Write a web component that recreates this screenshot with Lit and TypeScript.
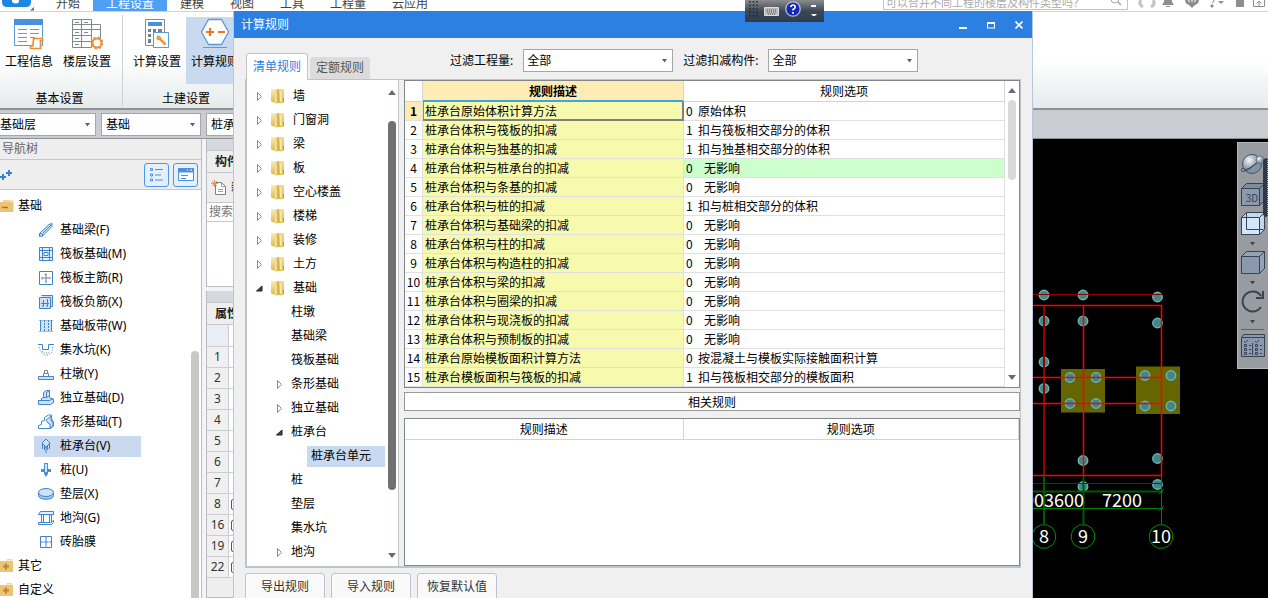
import { LitElement, html, css, svg, nothing } from "lit";
import { customElement, property, state } from "lit/decorators.js";
import { classMap } from "lit/directives/class-map.js";

const base = css`
  * { box-sizing: border-box; }
  :host {
    font-family: "Noto Sans", "Noto Sans CJK SC", sans-serif;
    font-size: 12px;
    line-height: 20px;
    color: #000;
  }
  button, input, select {
    font: inherit;
    color: inherit;
    margin: 0;
    padding: 0;
    border: 0;
    background: none;
    border-radius: 0;
    outline: none;
  }
  svg { display: block; flex: none; }
  ul { list-style: none; margin: 0; padding: 0; }
  .combo { position: relative; display: block; }
  .combo select {
    appearance: none;
    width: 100%;
    height: 23px;
    padding: 0 20px 0 4px;
    border: 1px solid #a6a6a6;
    background: #fff;
  }
  .combo svg { position: absolute; right: 5px; top: 10px; pointer-events: none; }
`;

const caret = (color = "#606060") =>
  html`<svg width="7" height="4" viewBox="0 0 7 4"><path d="M1 0h5L3.500 3.500z" fill=${color} /></svg>`;
const arrowUp = html`<svg width="8" height="5" viewBox="0 0 8 5"><path d="M0 5h8L4 0z" fill="#6a6a70" /></svg>`;
const arrowDown = html`<svg width="8" height="5" viewBox="0 0 8 5"><path d="M0 0h8L4 5z" fill="#6a6a70" /></svg>`;

/* ---------- ribbon icons ---------- */
const iconInfo = html`<svg width="32" height="32" viewBox="0 0 32 32" fill="none">
  <path d="M1.500 1.500h28v26h-28z" fill="#fff" stroke="#5b9bd8" />
  <path d="M1 1h29v6H1z" fill="#4a90dc" />
  <path d="M5 11.500h9M17 11.500h9M5 15.500h9M17 15.500h9M5 19.500h9M17 19.500h5M5 23.500h9" stroke="#8c9499" />
  <path d="M20.500 20.500h9v2h-2v8h-10v-2.500h2.500z" fill="#fff" stroke="#ec8f36" stroke-width="1.700" stroke-linejoin="round" />
</svg>`;
const iconFloor = html`<svg width="32" height="32" viewBox="0 0 32 32" fill="none" stroke="#7e898f">
  <path d="M1.500 1.500h19v28h-19zM20.500 6.500h9v14" fill="#fff" />
  <path d="M10.500 1.500v28M1.500 6.500h19M1.500 11.500h28M1.500 17.500h19M1.500 23.500h19M4 4.500h4M13 4.500h4M4 14.500h4M13 14.500h4M4 20.500h4M4 26.500h4" />
  <circle cx="26" cy="25" r="4.500" fill="#fff" stroke="#ee8f35" stroke-width="2" />
  <circle cx="26" cy="25" r="5.600" stroke="#ee8f35" stroke-width="1.800" stroke-dasharray="2.200 2.200" />
</svg>`;
const iconCalc = html`<svg width="32" height="32" viewBox="0 0 32 32" fill="none">
  <path d="M4.500 1.500h19v26h-19z" fill="#fff" stroke="#808b91" />
  <path d="M7 4h14v4H7z" fill="#4a90dc" />
  <path d="M7 11h3v3H7zM12 11h3v3h-3zM17 11h4v3h-4zM7 16h3v3H7zM12 16h2v3h-2zM7 21h3v4H7z" fill="#75828a" />
  <path d="M12.500 14.500h15v15h-15z" fill="#fff" stroke="#5b9bd8" />
  <path d="M16 18l3 .5 1 2.500 5 4.500-1.500 1.500-4.500-5-3-1 .2-2 2 1.500 1-1z" fill="#ee8f35" stroke="#ee8f35" />
</svg>`;
const iconRules = html`<svg width="32" height="32" viewBox="0 0 32 32" fill="none">
  <path d="M9.500 1.500h13l7 12.500-7 12.500h-13l-7-12.500z" fill="#fff" stroke="#5b9bd8" stroke-width="1.300" />
  <path d="M7 14h8M11 10v8M19 14h7" stroke="#ee7420" stroke-width="2.200" />
  <path d="M4 29.500h24" stroke="#5b9bd8" />
</svg>`;

/* ---------- tree icons ---------- */
const B = "#3f85cc";
const L = "#cfe2f7";
const navIcons: Record<string, unknown> = {
  beam: svg`<path d="M1.500 11.500L11 2.500l3-1v3l-9.500 9.500-3 .5z" fill=${L} stroke=${B} /><path d="M1.500 11.500l3 .5v2.500M5 11L13 3" stroke=${B} fill="none" />`,
  raft: svg`<path d="M1.500 1.500h13v13h-13zM4.500 1.500v13M11.500 1.500v13M1.500 4.500h13M1.500 11.500h13" fill="#e3effb" stroke=${B} /><path d="M6 6.500h4v3H6z" fill="#fff" stroke=${B} />`,
  main: svg`<path d="M1.500 1.500h13v13h-13z" fill="#fff" stroke=${B} /><path d="M8 4v8M4 8h8M6.500 4.500L8 4l1 1M4 7v2.500M12 7v2M7 12h2" fill="none" stroke="#77828a" />`,
  neg: svg`<path d="M3.500 1.500h11v11h-2M1.500 3.500h11v11h-11z" fill=${L} stroke=${B} /><path d="M5.500 6v6M9.500 5v7M3 9.500h8M4 12h2M8 12h2" fill="none" stroke=${B} />`,
  strip: svg`<path d="M1.500 2.500h13M1.500 13.500h13" stroke=${B} stroke-dasharray="1 1" /><path d="M2 3h12v10H2z" fill=${L} /><path d="M2.500 2v11M13.500 2v11" stroke=${B} /><path d="M6.500 2v11M10.500 2v11" stroke=${B} stroke-dasharray="2 1" />`,
  pit: svg`<path d="M0 2.500h4.500v5h6v-5H16" fill="none" stroke=${B} /><path d="M1 5l2 5 3 3h4l4-3 1-5M4 9l2 2h4l2-2" fill="none" stroke=${B} stroke-dasharray="1 1.500" />`,
  pier: svg`<path d="M.500 10.500h15v3H.500z" fill=${L} stroke=${B} /><path d="M5.500 10V7.500h5V10M6.500 7V4.500h3V7" fill="none" stroke="#77828a" />`,
  iso: svg`<path d="M.500 10.500h3v-2l2-1v-5l3-2h3v7l4 2v3l-3 2H.500z" fill=${L} stroke=${B} /><path d="M.500 10.500h11l4-2M5.500 7.500h3l3-2M8.500 7.500v-5l3-2" fill="none" stroke=${B} />`,
  bar: svg`<path d="M.500 14.500v-3l3-1v-3l3-1v-3l4-2.500h3v4l2 3v4l-3 2.500z" fill="#fff" stroke=${B} /><path d="M8 6l5-4v4l2 3v3l-3 2V10l-2-1z" fill=${L} stroke=${B} />`,
  cap: svg`<path d="M8 1l4 4-4 4.500L4 5z" fill=${L} stroke=${B} /><path d="M4.500 5v6M11.500 5v6M8 8v7M6.500 7v5M9.500 7v5" stroke=${B} fill="none" />`,
  pile: svg`<path d="M6 1h4v6h3v3h-3v2l-2 3-2-3v-2H3V7h3z" fill="#4b8fd4" /><path d="M7 2h2v8H7z" fill=${L} />`,
  pad: svg`<path d="M.500 6.500v3c0 5 15 5 15 0v-3" fill="#a9c9ea" stroke=${B} /><ellipse cx="8" cy="6.500" rx="7.500" ry="4" fill=${L} stroke=${B} />`,
  trench: svg`<path d="M.500 4.500l2-3h13v3z" fill="#e3effb" stroke=${B} /><path d="M3.500 4.500v8M5.500 4.500v8M11.500 4.500v8M13.500 4.500v8M.500 12.500h12l3-2v2l-2 2H.500z" fill="none" stroke=${B} />`,
  brick: svg`<path d="M2.500 2.500h11v11h-11zM8 2.500v11M2.500 8h11" fill="#fff" stroke=${B} /><path d="M5 8h1M10 8h1" stroke="#fff" />`,
};

const navItems: [string, string][] = [
  ["beam", "基础梁(F)"],
  ["raft", "筏板基础(M)"],
  ["main", "筏板主筋(R)"],
  ["neg", "筏板负筋(X)"],
  ["strip", "基础板带(W)"],
  ["pit", "集水坑(K)"],
  ["pier", "柱墩(Y)"],
  ["iso", "独立基础(D)"],
  ["bar", "条形基础(T)"],
  ["cap", "桩承台(V)"],
  ["pile", "桩(U)"],
  ["pad", "垫层(X)"],
  ["trench", "地沟(G)"],
  ["brick", "砖胎膜"],
];

const folderOpen = html`<svg width="15" height="14" viewBox="0 0 15 14">
  <path d="M3 1h10v3H3z" fill="#f3d49a" /><path d="M0 3h14v10H0z" fill="#edc377" />
  <path d="M10 1h4v12h-1V3h-3z" fill="#f7e3bb" /><path d="M2 8.500h6" stroke="#a87a1d" stroke-width="1.500" />
</svg>`;
const folderPlus = html`<svg width="15" height="14" viewBox="0 0 15 14">
  <path d="M7 0h5l1 1.500H6z" fill="#f3d49a" /><path d="M0 2h13v11H0z" fill="#edc377" />
  <path d="M3 7.500h6M6 4.500v6" stroke="#b88a2d" stroke-width="2" />
</svg>`;

@customElement("nav-panel")
export class NavPanel extends LitElement {
  @state() private selected = "桩承台(V)";

  static styles = [base, css`
    :host { display: flex; flex-direction: column; min-width: 0; background: #fff; border-right: 1px solid #b9bcc2; overflow: hidden; }
    .title { height: 21px; padding-left: 2px; background: #eee; color: #666; border-bottom: 1px solid #c4c7cc; }
    .tools { display: flex; align-items: center; gap: 4px; height: 30px; flex: none; padding-right: 3px; background: #eee; border-bottom: 1px solid #c4c7cc; }
    .tools .plus { margin-right: auto; }
    .toggle { width: 25px; height: 24px; display: grid; place-items: center; border: 1px solid #4a98ee; border-radius: 3px; background: #e5f0fc; }
    .body { flex: 1; min-height: 0; display: flex; overflow: hidden; }
    ul { flex: 1; min-width: 0; padding-top: 4px; }
    li { height: 24px; display: flex; align-items: center; }
    .group { display: flex; align-items: center; gap: 3px; height: 22px; }
    .item { display: flex; align-items: center; gap: 6px; height: 21px; margin-left: 34px; padding-left: 4px; width: 107px; }
    .item.on { background: #c9d9f0; }
    .bar { width: 8px; margin: 161px 2px 0 0; border-radius: 4px 4px 0 0; background: #c8c8c8; }
  `];

  render() {
    return html`
      <div class="title">导航树</div>
      <div class="tools">
        <button class="plus" aria-label="展开"><svg width="13" height="12" viewBox="0 0 13 12"><path d="M0 8h6M3 5v6M6 4h6M9 1v6" stroke="#3580d2" stroke-width="2" /></svg></button>
        <button class="toggle" aria-label="列表"><svg width="15" height="14" viewBox="0 0 15 14" fill="none" stroke="#4a90dc"><path d="M1.500.500h2v2h-2zM1.500 6h2v2h-2zM1.500 11h2v2h-2zM6 1.500h8M6 7h6M6 12h8" /></svg></button>
        <button class="toggle" aria-label="窗口"><svg width="16" height="14" viewBox="0 0 16 14" fill="none" stroke="#4a90dc"><path d="M.500.500h15v12h-15z" fill="#fff" /><path d="M0 2.500h16" stroke-width="4" /><path d="M9 2h1M12 2h2" stroke="#fff" /><path d="M3 7.500h7M3 10.500h5" /></svg></button>
      </div>
      <div class="body">
        <ul>
          <li><button class="group">${folderOpen}<span>基础</span></button></li>
          ${navItems.map(([icon, label]) => html`<li>
            <button class=${classMap({ item: true, on: label === this.selected })} @click=${() => (this.selected = label)}>
              <svg width="16" height="16" viewBox="0 0 16 16">${navIcons[icon]}</svg><span>${label}</span>
            </button></li>`)}
          <li><button class="group">${folderPlus}<span>其它</span></button></li>
          <li><button class="group">${folderPlus}<span>自定义</span></button></li>
        </ul>
        <div class="bar"></div>
      </div>`;
  }
}

@customElement("side-lists")
export class SideLists extends LitElement {
  static styles = [base, css`
    :host { display: flex; flex-direction: column; gap: 4px; min-width: 0; background: #f3f4f6; overflow: hidden; }
    section { border: 1px solid #b9bcc2; border-top: 0; background: #fff; }
    .strip { height: 12px; background: #d5d8dd; border-bottom: 1px solid #c4c7cc; }
    h3 { margin: 0; height: 22px; padding: 1px 8px; font-size: 12px; line-height: 20px; background: #eee; border-bottom: 1px solid #c4c7cc; color: #222; }
    .new { display: flex; align-items: center; gap: 4px; height: 30px; width: 100%; padding-left: 4px; background: #eee; border-bottom: 1px solid #c4c7cc; }
    input { display: block; width: 100%; height: 19px; padding-left: 2px; border-bottom: 1px solid #c4c7cc; }
    input::placeholder { color: #777; opacity: 1; }
    .empty { height: 64px; }
    .props { flex: 1; background: #eee; }
    table { width: 100%; border-spacing: 0; table-layout: fixed; }
    th, td { height: 21px; padding: 0; line-height: 20px; border-bottom: 1px solid #c9ccd1; }
    th { width: 22px; font-weight: 400; color: #333; background: #f0f0f0; border-right: 1px solid #c9ccd1; }
    td { background: #fff; }
    thead th { background: #e9eef6; height: 22px; }
    .box { display: block; width: 9px; height: 11px; margin-left: 2px; border: 1px solid #555; border-radius: 2px; }
  `];

  render() {
    return html`
      <section>
        <div class="strip"></div>
        <h3>构件</h3>
        <button class="new">
          <svg width="16" height="16" viewBox="0 0 16 16" fill="none"><path d="M4.500 2.500h6l4 4v8h-10z" fill="#fff" stroke="#77828a" /><path d="M10.500 2.500v4h4M7 9.500h5M7 11.500h5" stroke="#9aa3a8" /><path d="M3.500 0v7M0 3.500h7M1 1l5 5M6 1L1 6" stroke="#ee9a2c" /></svg>
          <span>新</span>
        </button>
        <input aria-label="搜索" placeholder="搜索" />
        <div class="empty"></div>
      </section>
      <section class="props">
        <div class="strip"></div>
        <h3>属性</h3>
        <table>
          <thead><tr><th></th><td></td></tr></thead>
          <tbody>
            ${[1, 2, 3, 4, 5, 6, 7, 8, 16, 19, 22].map((n) => html`<tr><th>${n}</th><td>${n > 7 ? html`<span class="box"></span>` : nothing}</td></tr>`)}
          </tbody>
        </table>
      </section>`;
  }
}

/* ---------- drawing area ---------- */
const piles: [number, number][] = [
  [1044, 295], [1083, 295], [1157.5, 297], [1044, 321], [1083, 321], [1157.5, 323],
  [1044, 362], [1070, 377.5], [1096, 377.5], [1145, 375.5], [1171, 375.5], [1044, 388.5],
  [1070, 403.5], [1096, 403.5], [1145, 406], [1171, 406], [1083, 460.5], [1157.5, 458.5],
  [1083, 486.5], [1157.5, 484.5],
];
const bubble = (x: number, y: number) =>
  Array.from({ length: 12 }, (_, i) => {
    const a = (Math.PI / 6) * i + Math.PI / 12;
    return `${(x + 12 * Math.cos(a)).toFixed(1)},${(y + 12 * Math.sin(a)).toFixed(1)}`;
  }).join(" ");

const cube = (face: string, side: string, extra: unknown = nothing) => html`
  <svg width="25" height="24" viewBox="0 0 25 24" stroke="#39434f">
    <path d="M.500 5.500l5-5h18v17l-5 5H.500z" fill=${side} /><path d="M.500 5.500h18v17H.500z" fill=${face} />
    <path d="M18.500 5.500l5-5" /> ${extra}
  </svg>`;

@customElement("model-canvas")
export class ModelCanvas extends LitElement {
  static styles = [base, css`
    :host { display: block; position: relative; background: #000; overflow: hidden; }
    text { font-family: "Noto Sans CJK SC", sans-serif; font-size: 18px; fill: #fff; text-anchor: middle; }
    text.end { text-anchor: end; }
    .views {
      position: absolute; top: 3px; right: 0; width: 31px; padding: 11px 0 0 3px; height: 227px;
      display: flex; flex-direction: column; align-items: flex-start;
      background: #989ba0; border: 1px solid #b4b7bb; border-right: 0;
    }
    .views button { display: flex; align-items: flex-start; height: 29px; }
    .views .short { height: 24px; }
    .views .more { height: 15px; padding: 6px 8px 0; }
    .views hr { width: 23px; margin: 0 0 4px; border: 0; border-top: 1px solid #666; }
    .knob { position: absolute; top: 19px; right: 0; width: 5px; height: 59px; border-radius: 4px 0 0 4px; background: #33374a; border-right: 1px dotted #8c9; }
    .views text { font-size: 10px; fill: #39434f; stroke: none; }
  `];

  render() {
    const more = html`<button class="more" aria-label="更多">${caret("#39434f")}</button>`;
    return html`
      <svg width="235" height="459" viewBox="1033 139 235 459" fill="none">
        <path d="M1061 369h44v43.500h-44zM1136 366.500h44v47.500h-44z" fill="#666600" />
        ${piles.map(([x, y]) => svg`<circle cx=${x} cy=${y} r="4.700" fill="#438686" stroke="#66b4b4" stroke-width="1.500" />`)}
        <path d="M1033 294.500h129M1033 483.500h129" stroke="#900000" />
        <path d="M1044 305v171" stroke="#980000" stroke-width="2" />
        <path d="M1033 305.500h128.500v170M1083.500 305v170M1033 377.500h128M1033 403.500h128M1033 475.500h129" stroke="#ff0000" stroke-width="1.500" />
        <path d="M1033 491.500h130M1044 476v48M1083.500 476v48" stroke="#005a00" stroke-width="2" />
        <path d="M1033 508.500h130M1161.500 476v48M1159 494l5-5M1159 511l5-5" stroke="#008000" />
        ${[1044, 1083, 1161].map((x) => svg`<polygon points=${bubble(x, 536.5)} stroke="#009000" />`)}
        <text class="end" x="1084" y="507">003600</text><text x="1122" y="507">7200</text>
        <text x="1044" y="543">8</text><text x="1083" y="543">9</text><text x="1161" y="543">10</text>
      </svg>
      <div class="views">
        <button aria-label="动态观察"><svg width="25" height="21" viewBox="0 0 25 21">
          <defs><radialGradient id="g" cx=".35" cy=".3"><stop offset="0" stop-color="#f4f7fa" /><stop offset="1" stop-color="#8293a6" /></radialGradient></defs>
          <circle cx="11" cy="10" r="9.500" fill="url(#g)" stroke="#445261" /><path d="M1 16c4 2 10-3 17-9" fill="none" stroke="#445261" stroke-width="1.500" />
          <circle cx="19" cy="6" r="4" fill="url(#g)" stroke="#6b7887" /><circle cx="2" cy="16" r="1.700" fill="#999" stroke="#445261" /></svg></button>
        <button aria-label="三维">${cube("#8a99ae", "#7d8ca1", svg`<text x="11" y="19">3D</text>`)}</button>
        <button class="short" aria-label="俯视">${cube("#d3e6fb", "#c3d8ee", svg`<path d="M5.500 6v11.500M5.500 17.500h17M18.500 6v11M5.500 6v-5" fill="none" />`)}</button>
        ${more}
        <button class="short" aria-label="视图">${cube("#8a99ae", "#93a2b6")}</button>
        ${more}
        <button class="short" aria-label="旋转"><svg width="25" height="24" viewBox="0 0 25 24"><path d="M20 17a10 10 0 1 1 0-11" fill="none" stroke="#39434f" stroke-width="2" /><path d="M22 1v7h-7" fill="none" stroke="#39434f" stroke-width="2" /></svg></button>
        ${more}
        <hr />
        <button class="short" aria-label="显示设置"><svg width="25" height="24" viewBox="0 0 25 24" fill="none" stroke="#39434f"><path d="M.500 3.500l2-3h21v22H.500z" fill="#8a99ae" /><path d="M.500 3.500h23M3 7l1.500 1.500L7 6M14 7l1.500 1.500L18 6M3.500 10.500h2v2h-2zM3.500 14.500h2v2h-2zM3.500 18.500h2v2h-2zM14.500 10.500h2v2h-2zM14.500 14.500h2v2h-2zM14.500 18.500h2v2h-2zM8 11.500h2M8 15.500h2M8 19.500h2M19 11.500h2M19 15.500h2M19 19.500h2M11.500 9v12" /></svg></button>
      </div>
      <div class="knob"></div>`;
  }
}

/* ---------- dialog ---------- */
interface TreeNode { label: string; level: number; mark?: "open" | "closed"; }
const tree: TreeNode[] = [
  ...["墙", "门窗洞", "梁", "板", "空心楼盖", "楼梯", "装修", "土方"].map((label) => ({ label, level: 1, mark: "closed" as const })),
  { label: "基础", level: 1, mark: "open" },
  { label: "柱墩", level: 2 },
  { label: "基础梁", level: 2 },
  { label: "筏板基础", level: 2 },
  { label: "条形基础", level: 2, mark: "closed" },
  { label: "独立基础", level: 2, mark: "closed" },
  { label: "桩承台", level: 2, mark: "open" },
  { label: "桩承台单元", level: 3 },
  { label: "桩", level: 2 },
  { label: "垫层", level: 2 },
  { label: "集水坑", level: 2 },
  { label: "地沟", level: 2, mark: "closed" },
];

const rules: [string, number, string][] = [
  ["桩承台原始体积计算方法", 0, "原始体积"],
  ["桩承台体积与筏板的扣减", 1, "扣与筏板相交部分的体积"],
  ["桩承台体积与独基的扣减", 1, "扣与独基相交部分的体积"],
  ["桩承台体积与桩承台的扣减", 0, "无影响"],
  ["桩承台体积与条基的扣减", 0, "无影响"],
  ["桩承台体积与桩的扣减", 1, "扣与桩相交部分的体积"],
  ["桩承台体积与基础梁的扣减", 0, "无影响"],
  ["桩承台体积与柱的扣减", 0, "无影响"],
  ["桩承台体积与构造柱的扣减", 0, "无影响"],
  ["桩承台体积与梁的扣减", 0, "无影响"],
  ["桩承台体积与圈梁的扣减", 0, "无影响"],
  ["桩承台体积与现浇板的扣减", 0, "无影响"],
  ["桩承台体积与预制板的扣减", 0, "无影响"],
  ["桩承台原始模板面积计算方法", 0, "按混凝土与模板实际接触面积计算"],
  ["桩承台模板面积与筏板的扣减", 1, "扣与筏板相交部分的模板面积"],
];

const folder = html`<svg width="14" height="16" viewBox="0 0 14 16">
  <defs>
    <linearGradient id="a" x1="0" x2="0" y1="0" y2="1"><stop offset="0" stop-color="#f8eeb8" /><stop offset="1" stop-color="#dcbb4c" /></linearGradient>
    <linearGradient id="b" x1="0" x2="0" y1="0" y2="1"><stop offset="0" stop-color="#f0dc8c" /><stop offset="1" stop-color="#d9b648" /></linearGradient>
  </defs>
  <path d="M0 1h6v14l-5-1-1-1z" fill="url(#a)" />
  <path d="M7 1h5l1 1v12l-1 1H6z" fill="url(#b)" />
  <path d="M5 2l3-1v13l-3 2z" fill="#d6b653" /><path d="M4 2l2 1v13l-2-1z" fill="#efdc92" />
  <path d="M9 3h2v11H9z" fill="#f5e7a6" /><path d="M12 10h1v3h-1z" fill="#62a8d0" />
</svg>`;
const mark = (m?: "open" | "closed") => html`<svg width="7" height="9" viewBox="0 0 7 9">
  ${m === "open" ? svg`<path d="M6 2v5H.500z" fill="#404040" stroke="#222" />` : m === "closed" ? svg`<path d="M1.500.500l4 4-4 4z" fill="#fff" stroke="#8a8a8a" />` : nothing}</svg>`;

@customElement("rules-dialog")
export class RulesDialog extends LitElement {
  @property({ type: String }) heading = "";
  @state() private selected = "桩承台单元";

  static styles = [base, css`
    :host { display: flex; flex-direction: column; background: #f0f0f0; border: 1px solid #b7c6dc; border-width: 0 1px; }
    .title { display: flex; align-items: center; gap: 20px; height: 27px; flex: none; margin: 0 -1px; padding: 0 10px 0 8px; background: #2b80e1; color: #fff; }
    .title h2 { margin: 0 auto 0 0; font-size: 12px; font-weight: 400; }
    .title button { display: block; }
    .head { display: flex; align-items: flex-end; padding: 11px 12px 0; height: 41px; flex: none; }
    .tab { height: 22px; padding: 0 6px; border-radius: 3px 3px 0 0; background: #dcdcdc; color: #555; }
    .tab.on { position: relative; height: 27px; width: 62px; margin: 0 2px -1px 0; border: 1px solid #c0c3c8; border-bottom: 0; background: #fff; color: #2b80e1; }
    .filters { display: flex; align-items: center; gap: 10px; margin-left: 80px; padding-bottom: 7px; }
    .filters .combo { width: 150px; }
    .filters select { padding-left: 3px; }
    .page { display: flex; gap: 5px; height: 489px; flex: none; margin: 0 11px; border: 1px solid #c0c3c8; border-left-width: 2px; border-bottom-width: 2px; }
    .tree { display: flex; width: 152px; flex: none; background: #fff; border-right: 1px solid #c0c3c8; }
    .tree ul { flex: 1; min-width: 0; padding-top: 4px; }
    li { height: 24px; display: flex; align-items: center; }
    li button { display: flex; align-items: center; height: 21px; white-space: nowrap; }
    .l1 { padding-left: 9px; }
    .l1 button { gap: 8px; }
    .l2 { padding-left: 29px; }
    .l2 button { gap: 8px; }
    .l3 { padding-left: 60px; }
    .l3 button { width: 78px; padding-left: 4px; }
    .l3 .on { background: #c9d9f0; }
    .scroll { display: flex; flex-direction: column; align-items: center; width: 13px; padding: 10px 0 8px; }
    .scroll i { width: 8px; height: 369px; margin: 26px 0 auto; border-radius: 4px; background: #707070; }
    .grids { flex: 1; min-width: 0; display: flex; flex-direction: column; font-family: "Noto Sans CJK SC", sans-serif; }
    .grid { display: flex; background: #fff; border: 1px solid #82868d; }
    table { flex: 1; width: 100%; border-spacing: 0; table-layout: fixed; }
    th, td { height: 19px; padding: 0; line-height: 18px; font-weight: 400; text-align: left; border: 0 solid #e0e0e0; border-width: 0 1px 1px 0; white-space: nowrap; }
    thead th { height: 21px; line-height: 18px; text-align: center; border-color: #d4d4d4; }
    .c0 { width: 18px; }
    .c1 { width: 43.5%; }
    .rest .c1 { width: 45.4%; }
    tbody th { text-align: center; }
    tbody .c1 { padding-left: 2px; background: #f7faad; }
    tbody td:last-child { padding-left: 2px; }
    .now { font-weight: 700; background: #ffecb5; }
    thead .now { border-bottom: 2px solid #3fa7d6; }
    tbody tr:first-child .c1 { border-color: #808080; border-width: 0 2px 2px 0; line-height: 17px; box-shadow: inset 1px 0 #3fa7d6; }
    .hit { background: #ccffcc; }
    .code { display: inline-block; width: 12px; }
    .none { padding-left: 6px; }
    .vbar { display: flex; flex-direction: column; align-items: center; justify-content: space-between; width: 14px; padding: 7px 0; }
    .vbar i { width: 8px; height: 80px; margin: 7px 0 auto; border-radius: 4px; background: #d9d9d9; }
    .related { height: 19px; margin: 4px 0 7px; line-height: 17px; text-align: center; background: #fff; border: 1px solid #999; }
    .rest { flex: 1; align-items: flex-start; }
    .foot { display: flex; gap: 6px; padding: 5px 11px; }
    .foot button { width: 80px; height: 28px; border: 1px solid #b9c3d3; border-radius: 3px; background: #f9f9f9; color: #333; }
  `];

  private combo(id: string, label: string) {
    return html`<label for=${id}>${label}</label>
      <span class="combo"><select id=${id}><option>全部</option></select>${caret()}</span>`;
  }

  render() {
    return html`
      <div class="title">
        <h2>${this.heading}</h2>
        <button aria-label="最小化"><svg width="8" height="8" viewBox="0 0 8 8"><path d="M0 6h8v2H0z" fill="#fff" /></svg></button>
        <button aria-label="最大化"><svg width="8" height="8" viewBox="0 0 8 8"><path d="M0 1h8v6.500H0zM1 3v3.500h6V3z" fill="#fff" fill-rule="evenodd" /></svg></button>
        <button aria-label="关闭"><svg width="8" height="8" viewBox="0 0 8 8"><path d="M.500.500l7 7M7.500.500l-7 7" stroke="#fff" stroke-width="1.600" /></svg></button>
      </div>
      <div class="head">
        <button class="tab on">清单规则</button>
        <button class="tab">定额规则</button>
        <div class="filters">${this.combo("qty", "过滤工程量:")}${this.combo("part", "过滤扣减构件:")}</div>
      </div>
      <div class="page">
        <div class="tree">
          <ul>
            ${tree.map((n) => html`<li class="l${n.level}">
              <button class=${classMap({ on: n.label === this.selected })} @click=${() => (this.selected = n.label)}>
                ${n.level < 3 ? mark(n.mark) : nothing}${n.level === 1 ? folder : nothing}<span>${n.label}</span>
              </button></li>`)}
          </ul>
          <div class="scroll">${arrowUp}<i></i>${arrowDown}</div>
        </div>
        <div class="grids">
          <div class="grid">
            <table>
              <thead><tr><th class="c0"></th><th class="c1 now">规则描述</th><th>规则选项</th></tr></thead>
              <tbody>
                ${rules.map(([name, code, text], i) => html`<tr>
                  <th class=${classMap({ now: i === 0 })}>${i + 1}</th>
                  <td class="c1">${name}</td>
                  <td class=${classMap({ hit: i === 3 })}><span class="code">${code}</span><span class=${classMap({ none: text === "无影响" })}>${text}</span></td>
                </tr>`)}
              </tbody>
            </table>
            <div class="vbar">${arrowUp}<i></i>${arrowDown}</div>
          </div>
          <div class="related">相关规则</div>
          <div class="grid rest">
            <table><thead><tr><th class="c1">规则描述</th><th>规则选项</th></tr></thead></table>
          </div>
        </div>
      </div>
      <div class="foot"><button>导出规则</button><button>导入规则</button><button>恢复默认值</button></div>`;
  }
}

/* ---------- shell ---------- */
@customElement("app-root")
export class AppRoot extends LitElement {
  @state() private tab = "工程设置";

  static styles = [base, css`
    :host { display: flex; flex-direction: column; position: relative; height: 100vh; overflow: hidden; background: #f3f4f6; }
    .menu { display: flex; height: 12px; flex: none; overflow: hidden; background: #fff; border-bottom: 1px solid #d5d5d5; }
    .logo { width: 43px; padding-left: 2px; }
    .menu nav { display: flex; margin-right: auto; }
    .menu nav button { display: flex; align-items: center; height: 11px; padding: 0 13px 4px; line-height: 7px; color: #444; white-space: nowrap; }
    .menu nav .on { background: #4f9ff5; color: #fff; }
    .search { display: flex; align-items: center; width: 245px; height: 10px; padding: 0 5px 4px 2px; border: 1px solid #c4c4c4; border-top: 0; }
    .search input { flex: 1; min-width: 0; height: 16px; font-size: 11px; line-height: 16px; }
    .search input::placeholder { color: #aaa; opacity: 1; }
    .quick { display: flex; gap: 5px; padding: 0 2px 0 10px; }
    .ribbon { display: flex; height: 98px; flex: none; background: linear-gradient(#fff 50%, #e5eaea); border-bottom: 2px solid #8d9195; }
    .group { display: flex; flex-direction: column; align-items: center; justify-content: space-between; margin: 3px 0 2px; padding: 2px 3px 0 0; border-right: 1px solid #cfd2d4; }
    .group div { display: flex; }
    .group:first-child div { margin-right: 3px; }
    .group + .group { padding: 2px 0 0 5px; }
    .group > span { line-height: 14px; }
    .group div button { display: flex; flex-direction: column; align-items: center; gap: 2px; width: 58px; height: 67px; padding-top: 1px; }
    .group div .on { background: #c9d9f0; }
    .picks { display: flex; gap: 5px; height: 29px; flex: none; padding: 3px 0 0; background: #c9ccd1; border-bottom: 1px solid #8d9195; }
    .picks .combo { width: 100px; }
    .picks .combo:first-child { width: 96px; }
    .picks .combo:first-child select { padding-left: 0; border-left: 0; }
    .work { flex: 1; min-height: 0; display: grid; grid-template-columns: 202px minmax(0, 1fr) 235px; }
    side-lists { margin-left: 4px; }
    rules-dialog { position: absolute; top: 11px; left: 233px; right: 235px; bottom: 0; overflow: hidden; }
    .float { position: absolute; top: 0; left: 745px; display: flex; gap: 6px; align-items: center; width: 79px; height: 22px; padding: 0 4px 4px; background: linear-gradient(#8b8d90, #3d4855 50%, #2c3b4c); }
  `];

  render() {
    const tabs = ["开始", "工程设置", "建模", "视图", "工具", "工程量", "云应用"];
    return html`
      <header class="menu">
        <div class="logo"><svg width="34" height="11" viewBox="0 0 34 11"><path d="M0 0h29v2q0 5-5 5H5Q0 7 0 2z" fill="#1d86e0" /><path d="M10 0h7v2q-3 3-7 0z" fill="#fff" /><path d="M32 7v3.500h-4z" fill="#666" /></svg></div>
        <nav>${tabs.map((t) => html`<button class=${classMap({ on: t === this.tab })} @click=${() => (this.tab = t)}>${t}</button>`)}</nav>
        <div class="search">
          <input aria-label="搜索帮助" placeholder="可以合并不同工程的楼层及构件类型吗？" />
          <svg width="12" height="9" viewBox="0 0 12 9" fill="none" stroke="#aaa"><circle cx="5" cy="1" r="4" /><path d="M8 4l3 3" stroke-width="1.500" /></svg>
        </div>
        <div class="quick">
          <svg width="18" height="9" viewBox="0 0 18 9"><path d="M3 0q-3 4 2 7M15 0q3 4-2 7" fill="none" stroke="#c4c4c4" stroke-width="3" /></svg>
          <svg width="14" height="9" viewBox="0 0 14 9"><path d="M3 0h8v2l2 3H1l2-3zM5 6h4v1H5z" fill="#8f8f8f" /></svg>
          <svg width="24" height="9" viewBox="0 0 24 9"><path d="M5 0h14q0 4-4 5l-3 3-3-3Q5 4 5 0z" fill="#8f8f8f" /><path d="M9 0v2M12 0v2M15 0v2" stroke="#fff" /></svg>
          <svg width="17" height="9" viewBox="0 0 17 9"><path d="M5 0q0 2-2 3M2 5h2v2H2z" fill="#8f8f8f" stroke="#8f8f8f" /><path d="M9 1h6l-3 3z" fill="#8f8f8f" /></svg>
          <svg width="16" height="9" viewBox="0 0 16 9"><path d="M5 0h8v7H5z" fill="#8f8f8f" /></svg>
          <svg width="14" height="9" viewBox="0 0 14 9" fill="none" stroke="#8f8f8f"><path d="M1.500 0v6.500h11V0M7 6V1M4.500 3.500L7 1l2.500 2.500" /></svg>
        </div>
      </header>
      <div class="ribbon">
        <div class="group">
          <div><button>${iconInfo}<span>工程信息</span></button><button>${iconFloor}<span>楼层设置</span></button></div>
          <span>基本设置</span>
        </div>
        <div class="group">
          <div><button>${iconCalc}<span>计算设置</span></button><button class="on">${iconRules}<span>计算规则</span></button></div>
          <span>土建设置</span>
        </div>
      </div>
      <div class="picks">
        ${["基础层", "基础", "桩承"].map((t) => html`<label class="combo"><select aria-label=${t}><option>${t}</option></select>${caret()}</label>`)}
      </div>
      <main class="work">
        <nav-panel></nav-panel>
        <side-lists></side-lists>
        <model-canvas></model-canvas>
      </main>
      <rules-dialog heading="计算规则"></rules-dialog>
      <div class="float">
        <svg width="9" height="18" viewBox="0 0 9 18" stroke="#20262e" stroke-width="1.500" stroke-dasharray="1.500 2"><path d="M1 1v17M4.500 1v17M8 1v17" /></svg>
        <svg width="15" height="14" viewBox="0 0 15 14"><path d="M.500 5.500h14v8H.500z" fill="#bbb" stroke="#ddd" /><path d="M3 8h9M3 10h9M4 12h7" stroke="#555" stroke-dasharray="1 1" /><path d="M5 5q0-3 4-2t4-3" fill="none" stroke="#777" /></svg>
        <svg width="16" height="16" viewBox="0 0 16 16"><circle cx="8" cy="8" r="7.200" fill="#1226b8" stroke="#b9bfd6" stroke-width="1.300" /><path d="M5.700 6.200Q6 4 8 4t2.200 2Q10.200 7.500 8 8.500v1M8 11v1.800" fill="none" stroke="#fff" stroke-width="1.700" /></svg>
        <svg width="12" height="14" viewBox="0 0 12 14"><path d="M4 3h5v2H4zM4 12h6l-3 3z" fill="#fff" /></svg>
      </div>`;
  }
}
